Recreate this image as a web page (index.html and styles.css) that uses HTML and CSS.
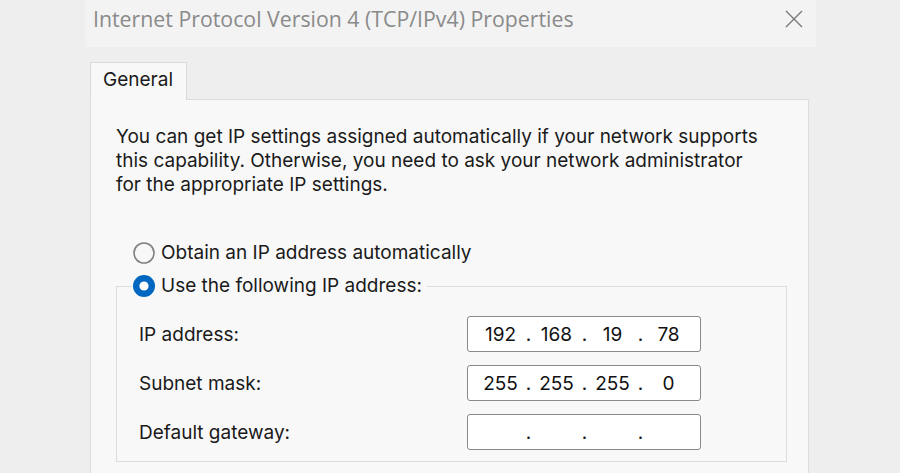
FILE: index.html
```html
<!DOCTYPE html>
<html lang="en">
<head>
<meta charset="utf-8">
<title>Internet Protocol Version 4 (TCP/IPv4) Properties</title>
<link rel="stylesheet" href="styles.css">
</head>
<body>
<div class="dialog">
  <div class="titlebar">
    <span class="title">Internet Protocol Version 4 (TCP/IPv4) Properties</span>
    <svg class="close" width="18" height="18" viewBox="0 0 18 18"><path d="M1 1L17 17M17 1L1 17" stroke="#7a7a7a" stroke-width="1.4" fill="none"/></svg>
  </div>
  <div class="body">
    <div class="tab">General</div>
    <div class="panel">
      <p class="desc">You can get IP settings assigned automatically if your network supports<br>this capability. Otherwise, you need to ask your network administrator<br>for the appropriate IP settings.</p>
      <div class="radio-row">
        <svg class="radio" width="22" height="22" viewBox="0 0 22 22"><circle cx="11" cy="11" r="10" fill="#f7f7f7" stroke="#808080" stroke-width="1.6"/></svg>
        <span>Obtain an IP address automatically</span>
      </div>
      <fieldset class="group">
        <legend class="radio-row legend">
          <svg class="radio" width="22" height="22" viewBox="0 0 22 22"><circle cx="11" cy="11" r="11" fill="#0067c0"/><circle cx="11" cy="11" r="4.6" fill="#ffffff"/></svg>
          <span>Use the following IP address:</span>
        </legend>
        <div class="field">
          <span class="label">IP address:</span>
          <div class="ipbox"><span class="oct">192</span><span class="dot">.</span><span class="oct">168</span><span class="dot">.</span><span class="oct">19</span><span class="dot">.</span><span class="oct">78</span></div>
        </div>
        <div class="field">
          <span class="label">Subnet mask:</span>
          <div class="ipbox"><span class="oct">255</span><span class="dot">.</span><span class="oct">255</span><span class="dot">.</span><span class="oct">255</span><span class="dot">.</span><span class="oct">0</span></div>
        </div>
        <div class="field">
          <span class="label">Default gateway:</span>
          <div class="ipbox"><span class="oct"></span><span class="dot">.</span><span class="oct"></span><span class="dot">.</span><span class="oct"></span><span class="dot">.</span><span class="oct"></span></div>
        </div>
      </fieldset>
    </div>
  </div>
</div>
</body>
</html>
```
FILE: styles.css
```css
html, body {
  margin: 0;
  padding: 0;
}
body {
  background: #eeeeee;
  font-family: "Inter", "Open Sans", sans-serif;
  font-size: 19px;
  color: #1a1a1a;
  overflow: hidden;
  height: 473px;
}
.dialog {
  margin-left: 85px;
  width: 731px;
}
.titlebar {
  height: 47px;
  background: #f3f3f3;
  display: flex;
  align-items: center;
  justify-content: space-between;
  padding: 0 13px 0 8px;
  box-sizing: border-box;
}
.title {
  font-family: "Open Sans", "Noto Sans", sans-serif;
  color: #8a8a8a;
  font-size: 21.3px;
  line-height: 26px;
  margin-top: -9px;
}
.close {
  display: block;
  margin-top: -9px;
}
.body {
  padding: 15px 7px 0 5px;
}
.tab {
  width: 97px;
  height: 38px;
  box-sizing: border-box;
  border: 1px solid #dadada;
  border-bottom: none;
  background: #f8f8f8;
  padding-left: 12px;
  line-height: 34px;
  position: relative;
  z-index: 1;
  margin-bottom: -1px;
}
.panel {
  border: 1px solid #dcdcdc;
  background: #f8f8f8;
  padding: 25px 21px 40px 25px;
  height: 400px;
}
.desc {
  margin: 0;
  line-height: 24px;
}
.radio-row {
  display: flex;
  align-items: center;
  gap: 6px;
  line-height: 24px;
  margin: 44px 0 0 17px;
}
.radio {
  display: block;
  flex: none;
}
.group {
  margin: 9px 0 0 0;
  border: 1px solid #dcdcdc;
  padding: 6px 22px 11px 22px;
  min-width: 0;
}
.legend {
  margin: 0 0 0 -7px;
  padding: 0 5px 0 1px;
}
.field {
  display: flex;
  align-items: center;
  height: 36px;
  margin-top: 13px;
}
.field:first-of-type {
  margin-top: 12px;
}
.label {
  width: 328px;
  flex: none;
}
.ipbox {
  width: 234px;
  height: 36px;
  box-sizing: border-box;
  border: 1px solid #8a8a8a;
  border-radius: 3px;
  background: #ffffff;
  display: flex;
  align-items: center;
  padding-left: 10px;
  color: #111111;
}
.oct {
  width: 45px;
  text-align: center;
}
.dot {
  width: 11px;
  text-align: center;
}
```
